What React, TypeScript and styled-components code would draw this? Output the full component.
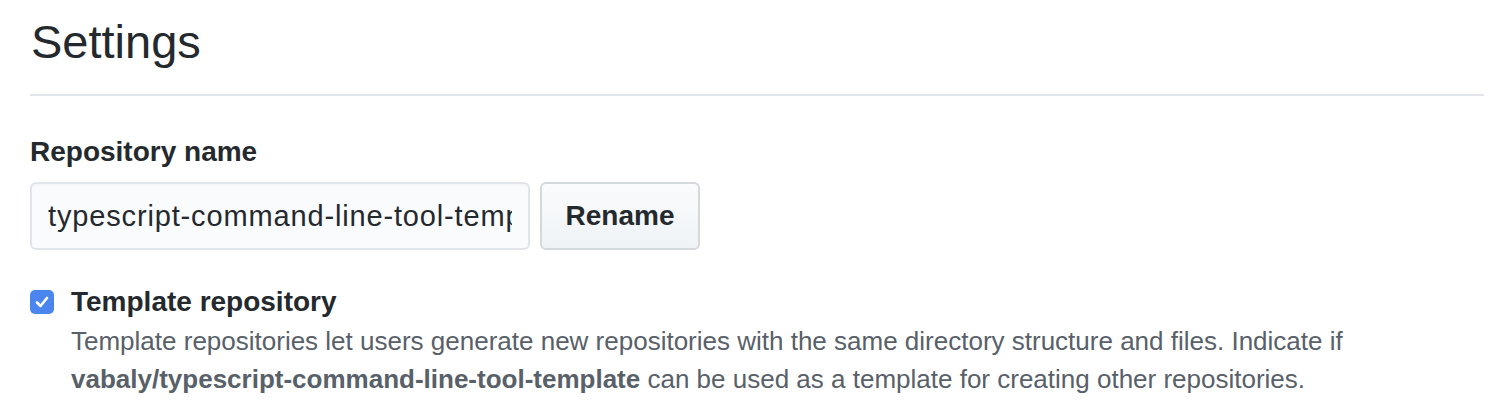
import { FunctionComponent } from 'react';
import styled, { createGlobalStyle } from 'styled-components';

const GlobalStyle = createGlobalStyle`
  html, body {
    margin: 0;
    padding: 0;
    background: #fff;
  }
  body {
    font-family: 'Liberation Sans', Arial, sans-serif;
    color: #24292e;
  }
`;

const SPage = styled.div`
  padding: 0 18px 0 30px;
`;

const STitle = styled.h2`
  margin: 0;
  padding: 12px 0 22px 1px;
  font-size: 47px;
  font-weight: 400;
  line-height: 60px;
  border-bottom: 2px solid #e1e4e8;
`;

const SGroup = styled.div`
  margin-top: 38px;
`;

const SLabel = styled.label`
  display: block;
  font-size: 28px;
  font-weight: 700;
  line-height: 36px;
  margin-bottom: 12px;
`;

const SRow = styled.div`
  display: flex;
  gap: 10px;
`;

const SInput = styled.input`
  box-sizing: border-box;
  width: 500px;
  height: 68px;
  padding: 0 16px;
  font-family: inherit;
  font-size: 29px;
  letter-spacing: 0.85px;
  color: #24292e;
  background: #fafbfc;
  border: 2px solid #e1e4e8;
  border-radius: 6px;
  box-shadow: inset 0 2px 0 rgba(225, 228, 232, 0.2);
  outline: none;
`;

const SButton = styled.button`
  box-sizing: border-box;
  width: 160px;
  height: 68px;
  font-family: inherit;
  font-size: 28px;
  font-weight: 700;
  color: #24292e;
  background: linear-gradient(#fafbfc, #eff3f6);
  border: 2px solid #d5d8db;
  border-radius: 6px;
`;

const SCheckRow = styled.div`
  display: flex;
  gap: 17px;
  margin-top: 32px;
`;

const SBox = styled.span`
  flex: none;
  display: flex;
  align-items: center;
  justify-content: center;
  width: 24px;
  height: 24px;
  margin-top: 8px;
  border-radius: 5px;
  background: #4a86ee;
`;

const STitleSmall = styled.div`
  font-size: 28px;
  font-weight: 700;
  line-height: 40px;
`;

const SNote = styled.p`
  margin: 0;
  max-width: 1290px;
  font-size: 26px;
  line-height: 38px;
  color: #586069;
`;

const App: FunctionComponent = () => (
  <SPage>
    <GlobalStyle />
    <STitle>Settings</STitle>
    <SGroup>
      <SLabel htmlFor='repo-name'>Repository name</SLabel>
      <SRow>
        <SInput id='repo-name' defaultValue='typescript-command-line-tool-template' />
        <SButton>Rename</SButton>
      </SRow>
    </SGroup>
    <SCheckRow>
      <SBox>
        <svg width='20' height='20' viewBox='0 0 20 20'>
          <path d='M5 10.5 L8.5 14 L15 6' fill='none' stroke='#fff' strokeWidth='2.6' strokeLinecap='round' strokeLinejoin='round' />
        </svg>
      </SBox>
      <div>
        <STitleSmall>Template repository</STitleSmall>
        <SNote>
          Template repositories let users generate new repositories with the same directory structure and files. Indicate if{' '}
          <b>vabaly/typescript-command-line-tool-template</b> can be used as a template for creating other repositories.
        </SNote>
      </div>
    </SCheckRow>
  </SPage>
);

export default App;
